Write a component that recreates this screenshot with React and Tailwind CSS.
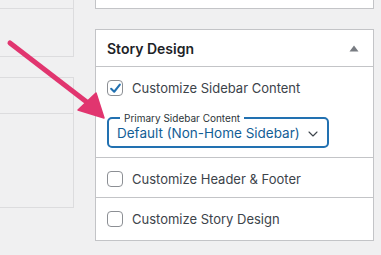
import { ChevronDown } from 'lucide-react';

const font = { fontFamily: 'Inter, "Noto Sans", sans-serif' };

const Checkbox = ({ checked }) => (
  <span className="w-4 h-4 rounded-[4px] border border-[#8c8f94] bg-white flex items-center justify-center shrink-0">
    {checked && (
      <svg width="13" height="13" viewBox="0 0 12 12" fill="none">
        <path d="M2 6.3 L4.8 9 L10 2.4" stroke="#2271b1" strokeWidth="1.9" strokeLinecap="round" strokeLinejoin="round" />
      </svg>
    )}
  </span>
);

const Row = ({ label, checked }) => (
  <label className="flex items-center gap-[9px] h-4 text-[13px] leading-4 text-[#3c434a] whitespace-nowrap">
    <Checkbox checked={checked} />
    <span>{label}</span>
  </label>
);

const App = () => {
  return (
    <div className="w-[381px] h-[255px] bg-[#f0f0f1] overflow-hidden relative flex" style={font}>
      {/* left column */}
      <div className="w-[74px] flex flex-col">
        <div className="h-[57px] border-r border-b border-[#dcdcde] flex flex-col">
          <div className="h-[9px] border-b border-[#dcdcde]" />
        </div>
        <div className="mt-[20px] h-[131px] border-t border-r border-b border-[#dcdcde] flex flex-col">
          <div className="h-[36px] border-b border-[#dcdcde]" />
        </div>
      </div>

      {/* right column */}
      <div className="ml-[21px] w-[279px] flex flex-col">
        <div className="h-[9px] bg-white border-x border-b border-[#c3c4c7]" />

        <div className="mt-[20px] bg-white border border-[#c3c4c7]">
          <div className="h-[37px] border-b border-[#c3c4c7] flex items-center justify-between pl-[11px] pr-[14px]">
            <h2 className="text-[14px] font-semibold text-[#1d2327] leading-none pt-px">Story Design</h2>
            <svg width="10" height="7" viewBox="0 0 10 7">
              <path d="M5 0.5 L9.5 6.5 L0.5 6.5 Z" fill="#787c82" />
            </svg>
          </div>

          <div className="px-[11px] pt-[13px] pb-[9px] border-b border-[#c3c4c7]">
            <Row label="Customize Sidebar Content" checked />
            <div className="relative mt-[21px] w-[222px] h-[31px] border-2 border-[#2271b1] rounded-[5px] flex items-center justify-between pl-[8px] pr-[6px]">
              <span className="absolute -top-[8px] left-[11px] bg-white px-[4px] text-[10px] leading-[14px] text-[#2c3338] whitespace-nowrap">
                Primary Sidebar Content
              </span>
              <span className="text-[13.5px] text-[#135e96] leading-none pt-[3px] whitespace-nowrap">Default (Non-Home Sidebar)</span>
              <ChevronDown size={16} strokeWidth={1.6} color="#3c434a" className="mt-[2px] shrink-0" />
            </div>
          </div>

          <div className="h-[40px] px-[11px] pt-[2px] flex items-center border-b border-[#c3c4c7]">
            <Row label="Customize Header & Footer" />
          </div>

          <div className="h-[42px] px-[11px] flex items-center">
            <Row label="Customize Story Design" />
          </div>
        </div>
      </div>

      {/* annotation arrow */}
      <svg className="absolute left-0 top-0 pointer-events-none" width="381" height="255" viewBox="0 0 381 255">
        <line x1="10" y1="43" x2="88" y2="103" stroke="#e1356f" strokeWidth="5" strokeLinecap="round" />
        <path d="M78 110 L96 93 L104 118 Z" fill="#e1356f" stroke="#e1356f" strokeWidth="1.5" strokeLinejoin="round" />
      </svg>
    </div>
  );
};

export default App;
